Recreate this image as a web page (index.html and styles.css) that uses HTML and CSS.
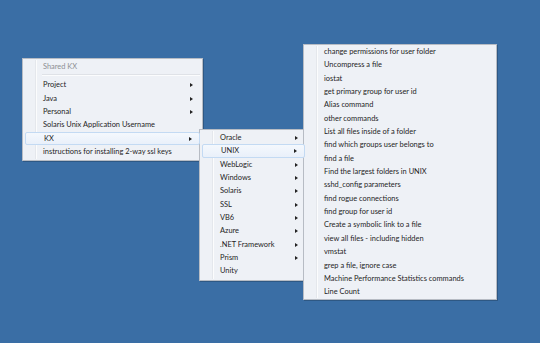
FILE: index.html
```html
<!DOCTYPE html>
<html lang="en">
<head>
    <meta charset="UTF-8">
    <title>Context menu</title>
    <link rel="stylesheet" href="styles.css">
</head>
<body>
    <div class="desktop">
        <div class="menu menu-main">
            <div class="item disabled">Shared KX</div>
            <div class="sep"></div>
            <div class="item sub">Project</div>
            <div class="item sub">Java</div>
            <div class="item sub">Personal</div>
            <div class="item">Solaris Unix Application Username</div>
            <div class="item sub active">KX</div>
            <div class="item">instructions for installing 2-way ssl keys</div>
        </div>

        <div class="menu menu-kx">
            <div class="item sub">Oracle</div>
            <div class="item sub active">UNIX</div>
            <div class="item sub">WebLogic</div>
            <div class="item sub">Windows</div>
            <div class="item sub">Solaris</div>
            <div class="item sub">SSL</div>
            <div class="item sub">VB6</div>
            <div class="item sub">Azure</div>
            <div class="item sub">.NET Framework</div>
            <div class="item sub">Prism</div>
            <div class="item">Unity</div>
        </div>

        <div class="menu menu-unix">
            <div class="item">change permissions for user folder</div>
            <div class="item">Uncompress a file</div>
            <div class="item">iostat</div>
            <div class="item">get primary group for user id</div>
            <div class="item">Alias command</div>
            <div class="item">other commands</div>
            <div class="item">List all files inside of a folder</div>
            <div class="item">find which groups user belongs to</div>
            <div class="item">find a file</div>
            <div class="item">Find the largest folders in UNIX</div>
            <div class="item">sshd_config parameters</div>
            <div class="item">find rogue connections</div>
            <div class="item">find group for user id</div>
            <div class="item">Create a symbolic link to a file</div>
            <div class="item">view all files - including hidden</div>
            <div class="item">vmstat</div>
            <div class="item">grep a file, ignore case</div>
            <div class="item">Machine Performance Statistics commands</div>
            <div class="item">Line Count</div>
        </div>
    </div>
</body>
</html>
```

FILE: styles.css
```css
body {
    margin: 0;
    background: #3a6ea5;
    font-family: Lato, "Noto Sans", sans-serif;
    font-size: 7.45px;
    color: #1e1e1e;
}

.desktop {
    position: relative;
    width: 540px;
    height: 343px;
    overflow: hidden;
}

.menu {
    position: absolute;
    display: flex;
    flex-direction: column;
    background: #eef1f6;
    border: 1px solid #b7bcc4;
    box-shadow: 1px 1px 0 rgba(0, 0, 0, 0.2);
    box-sizing: border-box;
}

/* icon gutter line */
.menu::before {
    content: "";
    position: absolute;
    top: 1px;
    bottom: 1px;
    left: 12px;
    width: 1px;
    background: #e4e7ec;
    border-right: 1px solid #fbfcfd;
}

.menu-main {
    left: 22px;
    top: 58px;
    width: 181px;
    padding: 1px 0 2px;
}

.menu-kx {
    left: 199px;
    top: 129px;
    width: 109px;
    padding: 1px 0 2px;
}

.menu-unix {
    left: 303px;
    top: 44px;
    width: 194px;
    padding: 0;
}

.item {
    position: relative;
    height: 13.35px;
    line-height: 13.35px;
    padding-left: 20px;
    white-space: nowrap;
    z-index: 1;
}

.item.disabled {
    color: #8d8f93;
}

.item.sub::after {
    content: "";
    position: absolute;
    right: 9px;
    top: 5px;
    border-left: 3px solid #222;
    border-top: 2px solid transparent;
    border-bottom: 2px solid transparent;
}

.item.active {
    margin: 0 2px;
    padding-left: 18px;
    border: 1px solid #c3daf3;
    border-radius: 2px;
    background: linear-gradient(#f4f8fd, #e9f0fa);
    height: 11.35px;
    line-height: 11.35px;
}

.item.active::after {
    right: 7px;
    top: 4px;
}

.sep {
    height: 1px;
    margin: 1px 2px 2px 19px;
    background: #dfe2e7;
    border-bottom: 1px solid #fbfcfd;
    position: relative;
    z-index: 1;
}
```
